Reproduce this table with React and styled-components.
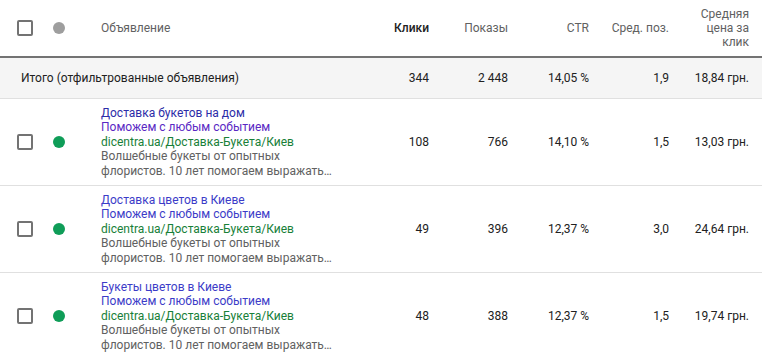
import React from "react";
import styled, { createGlobalStyle } from "styled-components";

const Global = createGlobalStyle`
  html, body { margin: 0; padding: 0; background: #fff; }
  body { font-family: Roboto, "Noto Sans", Arial, sans-serif; font-size: 12px; color: #212121; }
`;

const COLS = "42px 59px 248px 92px 79px 81px 80px 81px";

const Table = styled.div`
  width: 762px;
  display: flex;
  flex-direction: column;
`;

const HeaderRow = styled.div`
  display: grid;
  grid-template-columns: ${COLS};
  align-items: center;
  min-height: 56px;
  border-bottom: 2px solid #737373;
  color: #616161;
  line-height: 14px;
`;

const TotalRow = styled.div`
  display: grid;
  grid-template-columns: 101px 248px 92px 79px 81px 80px 81px;
  align-items: center;
  height: 40px;
  background: #f5f5f5;
  border-bottom: 1px solid #e0e0e0;
  line-height: 14px;
`;

const TotalLabel = styled.div`
  grid-column: 1 / span 2;
  padding-left: 21px;
  white-space: nowrap;
`;

const AdRow = styled.div`
  display: grid;
  grid-template-columns: ${COLS};
  align-items: center;
  border-bottom: ${(p) => (p.$last ? "none" : "1px solid #e0e0e0")};
`;

const Cell = styled.div`
  text-align: ${(p) => p.$align || "left"};
  padding: 0 ${(p) => p.$padRight ?? 12}px 0 ${(p) => p.$padLeft ?? 8}px;
  font-weight: ${(p) => (p.$bold ? 500 : 400)};
  color: ${(p) => p.$color || "inherit"};
  box-sizing: border-box;
`;

const BoxCell = styled.div`
  display: flex;
  align-items: center;
  padding-left: ${(p) => p.$pad}px;
`;

const Checkbox = styled.span`
  display: block;
  width: 12px;
  height: 12px;
  border: 2px solid #737373;
  border-radius: 2px;
`;

const Dot = styled.span`
  display: block;
  width: 12px;
  height: 12px;
  border-radius: 50%;
  background: ${(p) => p.$color};
`;

const AdText = styled.div`
  padding: 7px 0;
  line-height: 14.4px;
  white-space: nowrap;
`;

const Headline = styled.div`
  color: ${(p) => p.$color || "#3c3cc8"};
`;

const Url = styled.div`
  color: #188038;
`;

const Description = styled.div`
  color: #616161;
`;

const ads = [
  {
    h1: "Доставка букетов на дом",
    h2: "Поможем с любым событием",
    c1: "#2c2ca8",
    c2: "#5a28c4",
    clicks: "108",
    shows: "766",
    ctr: "14,10 %",
    pos: "1,5",
    price: "13,03 грн.",
  },
  {
    h1: "Доставка цветов в Киеве",
    h2: "Поможем с любым событием",
    clicks: "49",
    shows: "396",
    ctr: "12,37 %",
    pos: "3,0",
    price: "24,64 грн.",
  },
  {
    h1: "Букеты цветов в Киеве",
    h2: "Поможем с любым событием",
    clicks: "48",
    shows: "388",
    ctr: "12,37 %",
    pos: "1,5",
    price: "19,74 грн.",
  },
];

export default function App() {
  return (
    <>
      <Global />
      <Table>
        <HeaderRow>
          <BoxCell $pad={17}>
            <Checkbox />
          </BoxCell>
          <BoxCell $pad={11}>
            <Dot $color="#9e9e9e" />
          </BoxCell>
          <Cell $padLeft={0}>Объявление</Cell>
          <Cell $align="right" $bold $color="#212121">Клики</Cell>
          <Cell $align="right">Показы</Cell>
          <Cell $align="right">CTR</Cell>
          <Cell $align="right">Сред. поз.</Cell>
          <Cell $align="right" $padLeft={12} $padRight={13}>
            Средняя цена за клик
          </Cell>
        </HeaderRow>
        <TotalRow>
          <TotalLabel>Итого (отфильтрованные объявления)</TotalLabel>
          <Cell $align="right">344</Cell>
          <Cell $align="right">2 448</Cell>
          <Cell $align="right">14,05 %</Cell>
          <Cell $align="right">1,9</Cell>
          <Cell $align="right" $padLeft={4} $padRight={13}>
            18,84 грн.
          </Cell>
        </TotalRow>
        {ads.map((a, i) => (
          <AdRow key={i} $last={i === ads.length - 1}>
            <BoxCell $pad={17}>
              <Checkbox />
            </BoxCell>
            <BoxCell $pad={11}>
              <Dot $color="#0f9d58" />
            </BoxCell>
            <AdText>
              <Headline $color={a.c1}>{a.h1}</Headline>
              <Headline $color={a.c2}>{a.h2}</Headline>
              <Url>dicentra.ua/Доставка-Букета/Киев</Url>
              <Description>Волшебные букеты от опытных</Description>
              <Description>флористов. 10 лет помогаем выражать…</Description>
            </AdText>
            <Cell $align="right">{a.clicks}</Cell>
            <Cell $align="right">{a.shows}</Cell>
            <Cell $align="right">{a.ctr}</Cell>
            <Cell $align="right">{a.pos}</Cell>
            <Cell $align="right" $padLeft={4} $padRight={13}>
              {a.price}
            </Cell>
          </AdRow>
        ))}
      </Table>
    </>
  );
}
